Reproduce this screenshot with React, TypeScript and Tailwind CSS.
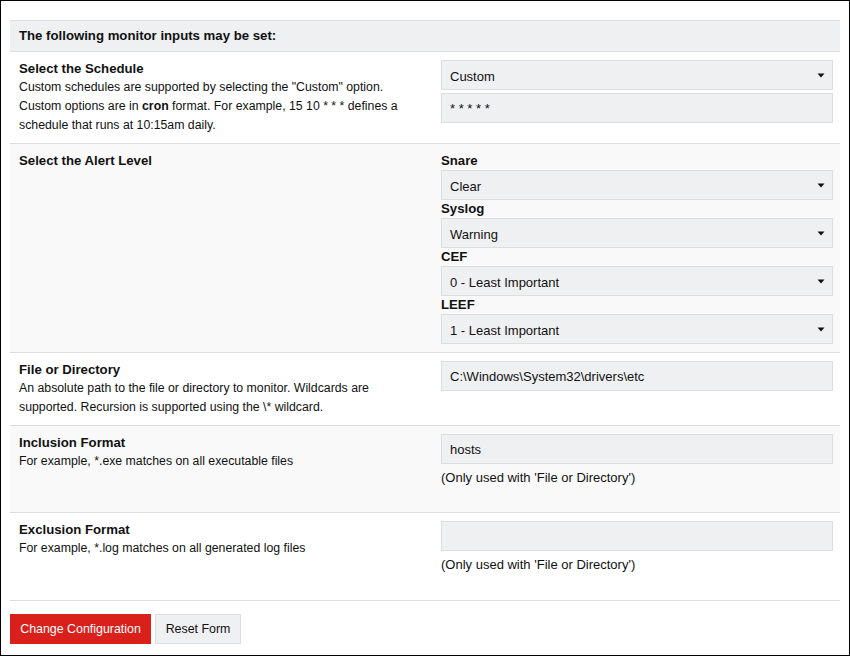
import type { ReactNode } from 'react'

// ─── Small building blocks ─────────────────────────────────────

function Caret() {
  return (
    <svg width="8" height="5" viewBox="0 0 8 5" className="shrink-0">
      <path d="M0.5 0.5 L7.5 0.5 L4 4.5 Z" fill="#111" />
    </svg>
  )
}

function SelectBox({ value }: { value: string }) {
  return (
    <div className="h-[30px] flex items-center justify-between bg-[#eff0f1] border border-[#dcdddf] pl-[8px] pr-[7px] text-[13px] text-[#111]">
      <span className="pt-[3px]">{value}</span>
      <Caret />
    </div>
  )
}

function TextBox({ value, small }: { value: string; small?: boolean }) {
  return (
    <div
      className={`h-[30px] flex bg-[#eff0f1] border border-[#dcdddf] pl-[8px] text-[#111] text-[13px] ${
        small ? 'items-start pt-[5px]' : 'items-center pt-[1px]'
      }`}
    >
      {value}
    </div>
  )
}

function Note() {
  return <p className="mt-[4px] leading-[19px] text-[13px] text-[#111]">(Only used with 'File or Directory')</p>
}

function Row({
  title,
  desc,
  alt,
  children,
}: {
  title: string
  desc?: ReactNode
  alt?: boolean
  children: ReactNode
}) {
  return (
    <div className={`grid grid-cols-[422px_1fr] border-b border-[#dddddd] ${alt ? 'bg-[#f9f9f9]' : 'bg-white'}`}>
      <div className="pl-[9px] pr-2 py-2">
        <h3 className="font-bold text-[13.2px] leading-[18px] text-[#111]">{title}</h3>
        {desc && <p className="text-[12.3px] leading-[19px] text-[#111]">{desc}</p>}
      </div>
      <div className="pl-[9px] pr-[7px] py-2">{children}</div>
    </div>
  )
}

// ─── Main component ────────────────────────────────────────────

export default function App() {
  const alertLevels = [
    { label: 'Snare', value: 'Clear' },
    { label: 'Syslog', value: 'Warning' },
    { label: 'CEF', value: '0 - Least Important' },
    { label: 'LEEF', value: '1 - Least Important' },
  ]

  return (
    <div
      className="w-[850px] h-[656px] border border-black bg-white px-[9px] pt-[19px]"
      style={{ fontFamily: '"Liberation Sans", Arial, sans-serif' }}
    >
      {/* Header */}
      <div className="h-[32px] flex items-center bg-[#eff0f1] border-y border-[#dddddd] pl-[9px]">
        <h2 className="font-bold text-[13.2px] text-[#111]">The following monitor inputs may be set:</h2>
      </div>

      <Row
        title="Select the Schedule"
        desc={
          <>
            Custom schedules are supported by selecting the "Custom" option.
            <br />
            Custom options are in <b>cron</b> format. For example, 15 10 * * * defines a
            <br />
            schedule that runs at 10:15am daily.
          </>
        }
      >
        <div className="flex flex-col gap-[3px]">
          <SelectBox value="Custom" />
          <TextBox value="* * * * *" small />
        </div>
      </Row>

      <Row title="Select the Alert Level" alt>
        {alertLevels.map((a) => (
          <div key={a.label}>
            <div className="font-bold text-[13.2px] leading-[18px] text-[#111]">{a.label}</div>
            <SelectBox value={a.value} />
          </div>
        ))}
      </Row>

      <Row
        title="File or Directory"
        desc={
          <>
            An absolute path to the file or directory to monitor. Wildcards are
            <br />
            supported. Recursion is supported using the \* wildcard.
          </>
        }
      >
        <TextBox value="C:\Windows\System32\drivers\etc" />
      </Row>

      <Row title="Inclusion Format" desc="For example, *.exe matches on all executable files" alt>
        <TextBox value="hosts" />
        <Note />
        <div className="h-[17px]" />
      </Row>

      <Row title="Exclusion Format" desc="For example, *.log matches on all generated log files">
        <TextBox value="" />
        <Note />
        <div className="h-[18px]" />
      </Row>

      {/* Actions */}
      <div className="flex gap-[4px] mt-[13px]">
        <button className="h-[30px] w-[141px] pt-[1px] bg-[#d9201a] text-white text-[12.4px]">Change Configuration</button>
        <button className="h-[30px] w-[86px] pt-[1px] bg-[#eff0f1] border border-[#dcdddf] text-[#111] text-[12.4px]">
          Reset Form
        </button>
      </div>
    </div>
  )
}
